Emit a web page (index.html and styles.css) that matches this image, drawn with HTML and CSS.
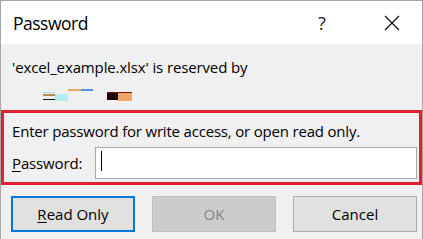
FILE: index.html
```html
<!DOCTYPE html>
<html>
<head>
<meta charset="utf-8">
<link rel="stylesheet" href="styles.css">
</head>
<body>
<div class="dialog">
  <div class="titlebar">
    <span class="title">Password</span>
    <span class="help">?</span>
    <span class="close">
      <svg width="16" height="16" viewBox="0 0 16 16"><path d="M1 1 L15 15 M15 1 L1 15" stroke="#000" stroke-width="1.1" fill="none"/></svg>
    </span>
  </div>
  <div class="content">
    <p class="reserved">'excel_example.xlsx' is reserved by</p>
    <div class="user">
      <svg width="90" height="14" viewBox="0 0 90 14">
        <rect x="1" y="4" width="12" height="1" fill="#a8d8ea"/>
        <rect x="1" y="6" width="12" height="2" fill="#b48a52"/>
        <rect x="1" y="8" width="12" height="2" fill="#efefef"/>
        <rect x="1" y="11" width="12" height="1" fill="#111"/>
        <rect x="13" y="6" width="13" height="7" fill="#b4ecef"/>
        <rect x="26" y="1" width="13" height="2" fill="#e9a95c"/>
        <rect x="39" y="1" width="12" height="2" fill="#4b98e2"/>
        <rect x="65" y="4" width="25" height="1" fill="#7a1010"/>
        <rect x="65" y="5" width="11" height="7" fill="#1c0202"/>
        <rect x="76" y="5" width="14" height="8" fill="#eea766"/>
      </svg>
    </div>
    <div class="highlight">
      <p class="prompt">Enter password for write access, or open read only.</p>
      <div class="field">
        <label class="label"><u>P</u>assword:</label>
        <div class="input"><span class="caret"></span></div>
      </div>
    </div>
    <div class="buttons">
      <button class="btn btn-default"><u>R</u>ead Only</button>
      <button class="btn btn-disabled">OK</button>
      <button class="btn">Cancel</button>
    </div>
  </div>
</div>
</body>
</html>
```

FILE: styles.css
```css
* { box-sizing: border-box; }
html, body {
  margin: 0;
  padding: 0;
  background: #f0f0f0;
}
.dialog {
  width: 423px;
  height: 239px;
  border: 1px solid #a6a6a6;
  border-bottom: none;
  background: #f0f0f0;
  font-family: "Open Sans", "Noto Sans", sans-serif;
  color: #000;
  overflow: hidden;
}
.titlebar {
  height: 43px;
  background: #fff;
  display: flex;
  align-items: center;
}
.title {
  font-size: 17.5px;
  line-height: 24px;
  letter-spacing: -0.5px;
  margin-left: 12px;
  flex: 1;
}
.help {
  font-size: 18px;
  line-height: 24px;
  width: 14px;
  text-align: center;
  margin-right: 55px;
  color: #222;
}
.close {
  display: flex;
  width: 16px;
  height: 16px;
  margin-right: 22px;
}
.content {
  display: flex;
  flex-direction: column;
}
.reserved {
  margin: 13px 0 0 11px;
  font-size: 15px;
  line-height: 20px;
  letter-spacing: -0.13px;
}
.user {
  display: flex;
  margin: 11px 0 0 41px;
  height: 14px;
}
.highlight {
  margin-top: 8px;
  border: 3px solid #e3202d;
  height: 75px;
  padding: 8px 2px 3px 8px;
  display: flex;
  flex-direction: column;
}
.prompt {
  margin: 0 0 6px 0;
  font-size: 15px;
  line-height: 20px;
  letter-spacing: -0.19px;
}
.field {
  display: flex;
  align-items: center;
}
.label {
  font-size: 15px;
  line-height: 20px;
  letter-spacing: -0.15px;
  width: 83px;
}
.label u, .btn u {
  text-underline-offset: 2px;
}
.input {
  flex: 1;
  height: 32px;
  background: #fff;
  border: 1px solid #a8a8a8;
  display: flex;
  padding: 3px 0 0 5px;
}
.caret {
  width: 1px;
  height: 20px;
  background: #000;
}
.buttons {
  display: flex;
  gap: 17px;
  margin: 11px 0 0 10px;
}
.btn {
  width: 124px;
  height: 36px;
  border: 1px solid #adadad;
  background: #e1e1e1;
  font-family: "Open Sans", "Noto Sans", sans-serif;
  font-size: 15px;
  color: #000;
  padding: 0;
  display: flex;
  align-items: center;
  justify-content: center;
}
.btn-default {
  border: 2px solid #0078d7;
}
.btn-disabled {
  background: #cccccc;
  border-color: #bfbfbf;
  color: #838383;
}
```
